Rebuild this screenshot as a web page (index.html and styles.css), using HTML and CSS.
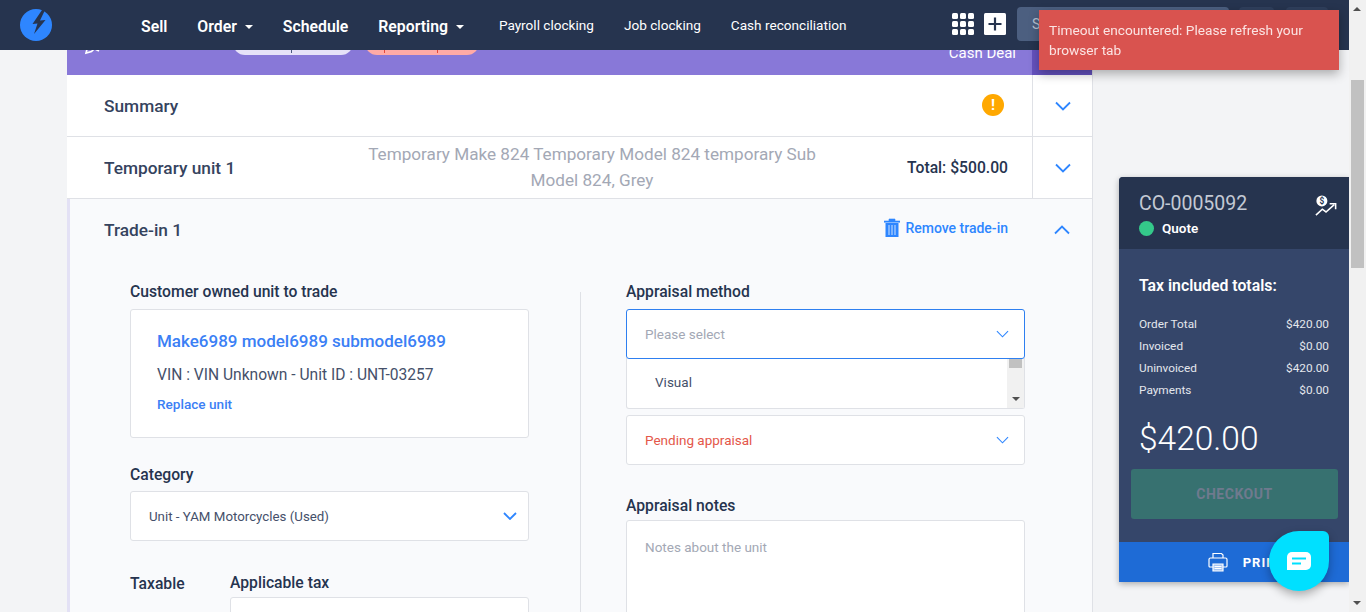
FILE: index.html
```html
<!DOCTYPE html>
<html lang="en">
<head>
    <meta charset="UTF-8">
    <title>Order CO-0005092</title>
    <link rel="stylesheet" href="styles.css">
</head>
<body>
    <header class="topbar">
        <svg class="logo" viewBox="0 0 32 32" width="32" height="32">
            <circle cx="16" cy="16" r="16" fill="#2e86ff"/>
            <path d="M22 1 L12.5 15 L17.5 14.5 L14 25 L25.5 11 L20 11.5 L25 1 Z" fill="#26344f"/>
        </svg>
        <nav class="nav-main">
            <a class="nav-item sell">Sell</a>
            <a class="nav-item order">Order <i class="caret"></i></a>
            <a class="nav-item schedule">Schedule</a>
            <a class="nav-item reporting">Reporting <i class="caret"></i></a>
        </nav>
        <nav class="nav-sub">
            <a>Payroll clocking</a>
            <a>Job clocking</a>
            <a>Cash reconciliation</a>
        </nav>
        <div class="topbar-right">
            <svg class="grid-icon" viewBox="0 0 22 22" width="22" height="22" fill="#fff">
                <rect x="0" y="0" width="6" height="6" rx="1.5"/><rect x="8" y="0" width="6" height="6" rx="1.5"/><rect x="16" y="0" width="6" height="6" rx="1.5"/>
                <rect x="0" y="8" width="6" height="6" rx="1.5"/><rect x="8" y="8" width="6" height="6" rx="1.5"/><rect x="16" y="8" width="6" height="6" rx="1.5"/>
                <rect x="0" y="16" width="6" height="6" rx="1.5"/><rect x="8" y="16" width="6" height="6" rx="1.5"/><rect x="16" y="16" width="6" height="6" rx="1.5"/>
            </svg>
            <svg class="plus-icon" viewBox="0 0 22 22" width="22" height="22">
                <rect width="22" height="22" rx="1.5" fill="#fff"/>
                <path d="M11 4.5v13M4.5 11h13" stroke="#26344f" stroke-width="2.2"/>
            </svg>
            <div class="search">Search</div>
            <div class="top-btn small"></div>
            <div class="top-btn"></div>
        </div>
    </header>

    <div class="page">
        <div class="content">
            <main class="deal">
                <section class="deal-banner">
                    <div class="banner-left">
                        <svg class="banner-icon" viewBox="0 0 18 18" width="18" height="18">
                            <path d="M2 16 L3.5 10.5 L13 1 L17 5 L7.5 14.5 Z M11 12 L15 14" fill="none" stroke="#fff" stroke-width="1.6"/>
                        </svg>
                        <span class="banner-title">UNIT DEAL</span>
                        <span class="pill pill-light"></span>
                        <span class="pill pill-red"></span>
                    </div>
                    <div class="banner-type">Cash Deal</div>
                    <div class="banner-toggle"></div>
                </section>

                <section class="row">
                    <div class="row-title">Summary</div>
                    <div class="row-info"><span class="warn">!</span></div>
                    <div class="row-toggle"><svg class="chev" viewBox="0 0 16 10" width="16" height="10"><path d="M1 1.5 L8 8.5 L15 1.5"/></svg></div>
                </section>

                <section class="row">
                    <div class="row-title">Temporary unit 1</div>
                    <div class="row-desc">Temporary Make 824 Temporary Model 824 temporary Sub Model 824, Grey</div>
                    <div class="row-total">Total: $500.00</div>
                    <div class="row-toggle"><svg class="chev" viewBox="0 0 16 10" width="16" height="10"><path d="M1 1.5 L8 8.5 L15 1.5"/></svg></div>
                </section>

                <section class="trade">
                    <div class="trade-head">
                        <div class="row-title">Trade-in 1</div>
                        <a class="remove">
                            <svg viewBox="0 0 16 19" width="16" height="19">
                                <path d="M0 3h16v1.2H0zM5 3V1h6v2" fill="#2e86ff" stroke="#2e86ff" stroke-width=".6"/>
                                <path d="M1.5 5h13v14h-13z" fill="#2e86ff"/>
                                <path d="M5 7v10M8 7v10M11 7v10" stroke="#f9fafc" stroke-width=".8"/>
                            </svg>
                            Remove trade-in
                        </a>
                        <svg class="chev chev-up" viewBox="0 0 16 10" width="16" height="10"><path d="M1 8.5 L8 1.5 L15 8.5"/></svg>
                    </div>
                    <div class="trade-body">
                        <div class="col col-left">
                            <label class="field-label">Customer owned unit to trade</label>
                            <div class="unit-card">
                                <a class="unit-name">Make6989 model6989 submodel6989</a>
                                <div class="unit-meta">VIN : VIN Unknown - Unit ID : UNT-03257</div>
                                <a class="unit-replace">Replace unit</a>
                            </div>
                            <label class="field-label label-category">Category</label>
                            <div class="select">
                                <span class="select-value">Unit - YAM Motorcycles (Used)</span>
                                <svg class="chev chev-field strong" viewBox="0 0 14 8" width="14" height="8"><path d="M1 1 L7 7 L13 1"/></svg>
                            </div>
                            <div class="tax-row">
                                <label class="field-label taxable">Taxable</label>
                                <div class="tax-col">
                                    <label class="field-label label-tax">Applicable tax</label>
                                    <div class="select"></div>
                                </div>
                            </div>
                        </div>
                        <div class="col col-right">
                            <label class="field-label">Appraisal method</label>
                            <div class="select select-open">
                                <span class="select-ph">Please select</span>
                                <svg class="chev chev-field" viewBox="0 0 14 8" width="13" height="8"><path d="M1 1 L7 7 L13 1"/></svg>
                            </div>
                            <div class="dropdown">
                                <div class="dropdown-item">Visual</div>
                                <div class="dropdown-scroll">
                                    <span class="dropdown-thumb"></span>
                                    <span class="arrow-down"></span>
                                </div>
                            </div>
                            <div class="select select-status">
                                <span class="select-pending">Pending appraisal</span>
                                <svg class="chev chev-field" viewBox="0 0 14 8" width="13" height="8"><path d="M1 1 L7 7 L13 1"/></svg>
                            </div>
                            <label class="field-label label-notes">Appraisal notes</label>
                            <div class="notes">Notes about the unit</div>
                        </div>
                    </div>
                </section>
            </main>

            <aside class="order-panel">
                <div class="panel-head">
                    <div>
                        <div class="order-no">CO-0005092</div>
                        <div class="order-status"><i class="dot"></i>Quote</div>
                    </div>
                    <svg class="trend" viewBox="0 0 24 24" width="22" height="22">
                        <circle cx="7.5" cy="6.5" r="6" fill="#fff"/>
                        <text x="7.5" y="10" text-anchor="middle" class="trend-sign">$</text>
                        <path d="M1 22 L8 15.5 L12 18.5 L21 10.5" fill="none" stroke="#fff" stroke-width="1.7"/>
                        <path d="M16 9.5 H22.5 V15.5" fill="none" stroke="#fff" stroke-width="1.7"/>
                    </svg>
                </div>
                <div class="panel-body">
                    <div class="totals-title">Tax included totals:</div>
                    <div class="line"><span>Order Total</span><span>$420.00</span></div>
                    <div class="line"><span>Invoiced</span><span>$0.00</span></div>
                    <div class="line"><span>Uninvoiced</span><span>$420.00</span></div>
                    <div class="line"><span>Payments</span><span>$0.00</span></div>
                    <div class="grand">$420.00</div>
                    <div class="checkout">CHECKOUT</div>
                </div>
                <div class="print">
                    <svg viewBox="0 0 20 20" width="20" height="20" fill="none" stroke="#fff" stroke-width="1.2">
                        <path d="M5 6V1.5h8.5L15 3v3"/>
                        <path d="M5 15H2a1 1 0 0 1-1-1V7.5a1.5 1.5 0 0 1 1.5-1.5h15A1.5 1.5 0 0 1 19 7.5V14a1 1 0 0 1-1 1h-3"/>
                        <path d="M5 12h10v7H5z" fill="#a9c6f2"/>
                        <path d="M6.5 14.5h7M6.5 16.5h7"/>
                    </svg>
                    <span>PRINT</span>
                </div>
            </aside>
        </div>

        <div class="scrollbar">
            <span class="scroll-up"></span>
            <span class="scroll-thumb"></span>
            <span class="scroll-down"></span>
        </div>
    </div>

    <div class="toast">Timeout encountered: Please refresh your browser tab</div>

    <div class="chat-bubble">
        <svg viewBox="0 0 24 18" width="24" height="18">
            <path d="M5 0h14a5 5 0 0 1 5 5v8a5 5 0 0 1-5 5H0V5a5 5 0 0 1 5-5z" fill="#fff"/>
            <path d="M5 6.5h14" stroke="#00e0ff" stroke-width="2"/>
            <path d="M5 11.5h9" stroke="#00e0ff" stroke-width="2"/>
        </svg>
    </div>
</body>
</html>
```

FILE: styles.css
```css
* {
    box-sizing: border-box;
}
html, body {
    height: 100%;
    margin: 0;
    overflow: hidden;
}
body {
    font-family: Roboto, "Liberation Sans", sans-serif;
    background-color: #f3f4f6;
    color: #26344f;
}

/* top bar */
.topbar {
    position: fixed;
    top: 0;
    left: 0;
    right: 17px;
    height: 50px;
    z-index: 5;
    display: flex;
    align-items: center;
    padding-left: 20px;
    background-color: #26344f;
    color: #fff;
}
.logo {
    flex: none;
}
.nav-main {
    display: flex;
    align-items: center;
    gap: 30px;
    margin-left: 89px;
    margin-top: 2px;
    font-size: 15.8px;
    font-weight: 600;
}
.nav-item {
    white-space: nowrap;
}
.caret {
    display: inline-block;
    width: 0;
    height: 0;
    margin-left: 4px;
    vertical-align: middle;
    border-left: 4px solid transparent;
    border-right: 4px solid transparent;
    border-top: 4px solid #fff;
}
.nav-sub {
    display: flex;
    gap: 30px;
    margin-left: 35px;
    font-size: 13.6px;
    white-space: nowrap;
}
.topbar-right {
    display: flex;
    align-items: center;
    margin-left: auto;
    padding-right: 21px;
    margin-top: -2px;
}
.grid-icon {
    margin-right: 10px;
}
.plus-icon {
    margin-right: 11px;
}
.search {
    width: 212px;
    height: 34px;
    margin-right: 10px;
    padding: 9px 15px;
    border-radius: 4px;
    background-color: #4c5f80;
    color: #b7c1d1;
    font-size: 14px;
}
.top-btn {
    width: 42px;
    height: 34px;
    border-radius: 4px;
    background-color: #303f5c;
}
.top-btn.small {
    width: 35px;
    margin-right: 12px;
}

/* page */
.page {
    display: flex;
    height: 612px;
}
.content {
    display: flex;
    flex: 1;
    align-items: flex-start;
    gap: 26px;
    padding-left: 67px;
    overflow: hidden;
}
.deal {
    flex: none;
    width: 1026px;
    min-height: 640px;
    border-right: 1px solid #dfe1e6;
    background-color: #fff;
}

/* purple banner, mostly scrolled under the top bar */
.deal-banner {
    display: flex;
    height: 75px;
    background-color: #8878d8;
    color: #fff;
}
.banner-left {
    display: flex;
    flex: 1;
    align-items: flex-end;
    gap: 30px;
    padding: 0 0 20px 17px;
}
.banner-title {
    width: 84px;
    margin-left: -13px;
    margin-bottom: 3px;
    font-size: 15px;
    font-weight: 500;
    letter-spacing: .5px;
    line-height: 14px;
}
.pill {
    height: 26px;
    border-radius: 12px;
}
.pill-light {
    width: 120px;
    background: linear-gradient(#4a5a80, #4a5a80) 58px 21px / 1px 3px no-repeat #e6e2f8;
}
.pill-red {
    width: 114px;
    margin-left: -18px;
    background:
        linear-gradient(#e4483c, #e4483c) 19px 21px / 1px 3px no-repeat,
        linear-gradient(#e4483c, #e4483c) 72px 21px / 1px 3px no-repeat,
        #ffaaa6;
}
.banner-type {
    padding: 45px 16px 0 0;
    font-size: 15px;
    line-height: 17px;
}
.banner-toggle {
    width: 60px;
    background-color: #6552bf;
}

/* collapsed rows */
.row {
    display: flex;
    align-items: center;
    height: 62px;
    border-bottom: 1px solid #dfe1e6;
    padding-left: 37px;
}
.row-title {
    flex: none;
    width: 200px;
    color: #35435e;
    font-size: 17.3px;
    font-weight: 500;
}
.row-info {
    flex: 1;
    display: flex;
    justify-content: flex-end;
    margin-top: -1px;
    padding-right: 28px;
}
.warn {
    display: flex;
    align-items: center;
    justify-content: center;
    width: 22px;
    height: 22px;
    border-radius: 50%;
    background-color: #ffa800;
    color: #fff;
    font-size: 15px;
    font-weight: 700;
}
.row-desc {
    width: 480px;
    margin-left: 48px;
    padding-bottom: 2px;
    text-align: center;
    color: #a3a8b5;
    font-size: 17.15px;
    line-height: 26px;
}
.row-total {
    flex: 1;
    padding-right: 24px;
    text-align: right;
    color: #26344f;
    font-size: 15.7px;
    font-weight: 500;
}
.row-toggle {
    display: flex;
    flex: none;
    align-items: center;
    justify-content: center;
    align-self: stretch;
    width: 60px;
    border-left: 1px solid #dfe1e6;
}
.chev {
    fill: none;
    stroke: #2e86ff;
    stroke-width: 1.8;
}

/* trade-in */
.trade {
    min-height: 420px;
    border-left: 3px solid #e3e1f5;
    background-color: #f9fafc;
}
.trade-head {
    display: flex;
    align-items: center;
    height: 62px;
    padding: 0 22px 0 34px;
}
.remove {
    display: flex;
    align-items: center;
    gap: 5px;
    margin-left: auto;
    margin-right: 46px;
    margin-top: -5px;
    color: #2e86ff;
    font-size: 14px;
    font-weight: 500;
}
.trade-body {
    display: flex;
    padding: 20px 0 0 60px;
}
.col-left {
    width: 399px;
}
.col-right {
    position: relative;
    width: 399px;
    margin-left: 97px;
}
.col-right::before {
    content: "";
    position: absolute;
    top: 11px;
    left: -46px;
    bottom: -60px;
    width: 1px;
    background-color: #dfe1e6;
}
.field-label {
    display: block;
    margin: 2px 0 9px;
    color: #26344f;
    font-size: 15.7px;
    line-height: 17px;
    font-weight: 500;
}
.unit-card {
    height: 129px;
    padding: 21px 26px 0;
    border: 1px solid #dfe1e6;
    border-radius: 3px;
    background-color: #fff;
}
.unit-name {
    display: block;
    color: #3b7ff5;
    font-size: 17px;
    font-weight: 500;
    line-height: 20px;
}
.unit-meta {
    margin-top: 14px;
    color: #45506a;
    font-size: 15.6px;
    line-height: 20px;
}
.unit-replace {
    display: block;
    margin-top: 9px;
    color: #3b7ff5;
    font-size: 13.6px;
    font-weight: 500;
    line-height: 20px;
}
.label-category {
    margin-top: 28px;
    margin-bottom: 8px;
}
.select {
    display: flex;
    align-items: center;
    justify-content: space-between;
    height: 50px;
    padding: 0 11px 0 18px;
    border: 1px solid #dfe1e6;
    border-radius: 3px;
    background-color: #fff;
    font-size: 13.5px;
}
.select-value {
    color: #45506a;
    font-size: 13.3px;
}
.select-open {
    position: relative;
    z-index: 1;
    border-color: #2e7ff0;
}
.select-ph {
    color: #a3a8b5;
}
.select-pending {
    color: #e4574a;
}
.chev-field {
    margin-right: 4px;
    stroke-width: 1.2;
}
.chev-field.strong {
    margin-right: 0;
    stroke-width: 1.8;
}
.tax-row {
    display: flex;
    margin-top: 31px;
}
.taxable {
    width: 100px;
    margin-top: 3px;
}
.label-tax {
    margin-bottom: 6px;
}
.tax-col {
    flex: 1;
}
.dropdown {
    display: flex;
    height: 51px;
    margin-top: -1px;
    border: 1px solid #dfe1e6;
    border-top: none;
    border-radius: 0 0 3px 3px;
    background-color: #fff;
}
.dropdown-item {
    flex: 1;
    padding: 15px 28px;
    color: #45506a;
    font-size: 13.5px;
    line-height: 18px;
}
.dropdown-scroll {
    position: relative;
    width: 17px;
    background-color: #f1f1f1;
}
.dropdown-thumb {
    display: block;
    width: 13px;
    height: 10px;
    margin: 0 auto;
    background-color: #c1c1c1;
}
.arrow-down {
    position: absolute;
    left: 5px;
    bottom: 7px;
    border-left: 4px solid transparent;
    border-right: 4px solid transparent;
    border-top: 4px solid #505050;
}
.select-status {
    margin-top: 6px;
}
.label-notes {
    margin-top: 32px;
    margin-bottom: 6px;
}
.notes {
    height: 130px;
    padding: 18px;
    border: 1px solid #dfe1e6;
    border-radius: 3px;
    background-color: #fff;
    color: #a3a8b5;
    font-size: 13.5px;
}

/* order panel */
.order-panel {
    flex: none;
    width: 230px;
    margin-top: 177px;
    border-radius: 4px 0 0 0;
    overflow: hidden;
    background-color: #35466a;
    color: #fff;
    box-shadow: 0 2px 6px rgba(0,0,0,0.3);
}
.panel-head {
    display: flex;
    justify-content: space-between;
    height: 72px;
    padding: 15px 12px 0 20px;
    background-color: #26344f;
}
.order-no {
    color: #c3c9d4;
    font-size: 19.5px;
    line-height: 24px;
}
.order-status {
    display: flex;
    align-items: center;
    gap: 8px;
    margin-top: 3px;
    font-size: 13.5px;
    font-weight: 600;
    line-height: 18px;
}
.dot {
    width: 15px;
    height: 15px;
    border-radius: 50%;
    background-color: #34c98a;
}
.trend {
    margin-top: 3px;
}
.trend-sign {
    font-size: 9px;
    font-weight: 700;
    fill: #26344f;
}
.panel-body {
    height: 293px;
    padding: 28px 11px 0 12px;
}
.totals-title {
    margin: 0 8px 18px;
    font-size: 15.8px;
    font-weight: 600;
    line-height: 18px;
}
.line {
    display: flex;
    justify-content: space-between;
    margin: 0 9px 0 8px;
    color: #e4e7ed;
    font-size: 11.8px;
    line-height: 22px;
}
.grand {
    margin: 18px 8px 10px;
    font-size: 33.5px;
    font-weight: 300;
    line-height: 40px;
}
.checkout {
    height: 50px;
    border-radius: 3px;
    background-color: #377170;
    color: #6f7a8e;
    font-size: 14px;
    font-weight: 700;
    letter-spacing: .5px;
    line-height: 50px;
    text-align: center;
}
.print {
    display: flex;
    align-items: center;
    justify-content: center;
    gap: 15px;
    height: 40px;
    padding-left: 25px;
    background-color: #1e6bd6;
    font-size: 13px;
    font-weight: 700;
    letter-spacing: 1px;
}

/* page scrollbar */
.scrollbar {
    position: relative;
    flex: none;
    width: 17px;
    background-color: #f1f1f1;
}
.scroll-thumb {
    position: absolute;
    top: 80px;
    left: 2px;
    width: 13px;
    height: 188px;
    background-color: #c1c1c1;
}
.scroll-up, .scroll-down {
    position: absolute;
    left: 4px;
    border-left: 4.5px solid transparent;
    border-right: 4.5px solid transparent;
}
.scroll-up {
    top: 7px;
    border-bottom: 4.5px solid #505050;
}
.scroll-down {
    bottom: 7px;
    border-top: 4.5px solid #505050;
}

/* things floating on top */
.toast {
    position: fixed;
    top: 10px;
    left: 1039px;
    z-index: 10;
    width: 300px;
    height: 60px;
    padding: 10px;
    background-color: #d9534f;
    color: #fbe4e3;
    font-size: 13.7px;
    line-height: 20px;
    box-shadow: 0 4px 10px rgba(0,0,0,0.3);
}
.chat-bubble {
    position: fixed;
    top: 531px;
    left: 1269px;
    z-index: 10;
    display: flex;
    align-items: center;
    justify-content: center;
    width: 60px;
    height: 60px;
    border-radius: 50% 6px 50% 50%;
    background-color: #00e0ff;
    box-shadow: 0 4px 10px rgba(0,0,0,0.3);
}
```
